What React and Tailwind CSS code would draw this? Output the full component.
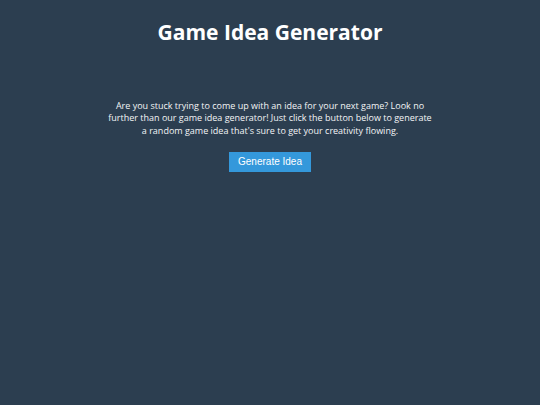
export default function App() {
  return (
    <div className="min-h-screen bg-[#2c3e50] text-white" style={{ fontFamily: '"Open Sans", "Noto Sans", sans-serif' }}>
      <div className="flex flex-col items-center px-4 pt-[18px]">
        <h1 className="text-[21px] font-bold leading-[28px]">Game Idea Generator</h1>
        <p className="mt-[54px] max-w-[328px] text-center text-[9px] leading-[12.3px] text-gray-100">
          Are you stuck trying to come up with an idea for your next game? Look no further than our game idea generator! Just click the button below to generate a random game idea that's sure to get your creativity flowing.
        </p>
        <button
          className="mt-[15px] h-[20px] w-[82px] bg-[#3498db] text-[10px] text-white"
          style={{ fontFamily: '"Liberation Sans", Arial, sans-serif' }}
        >
          Generate Idea
        </button>
      </div>
    </div>
  );
}
